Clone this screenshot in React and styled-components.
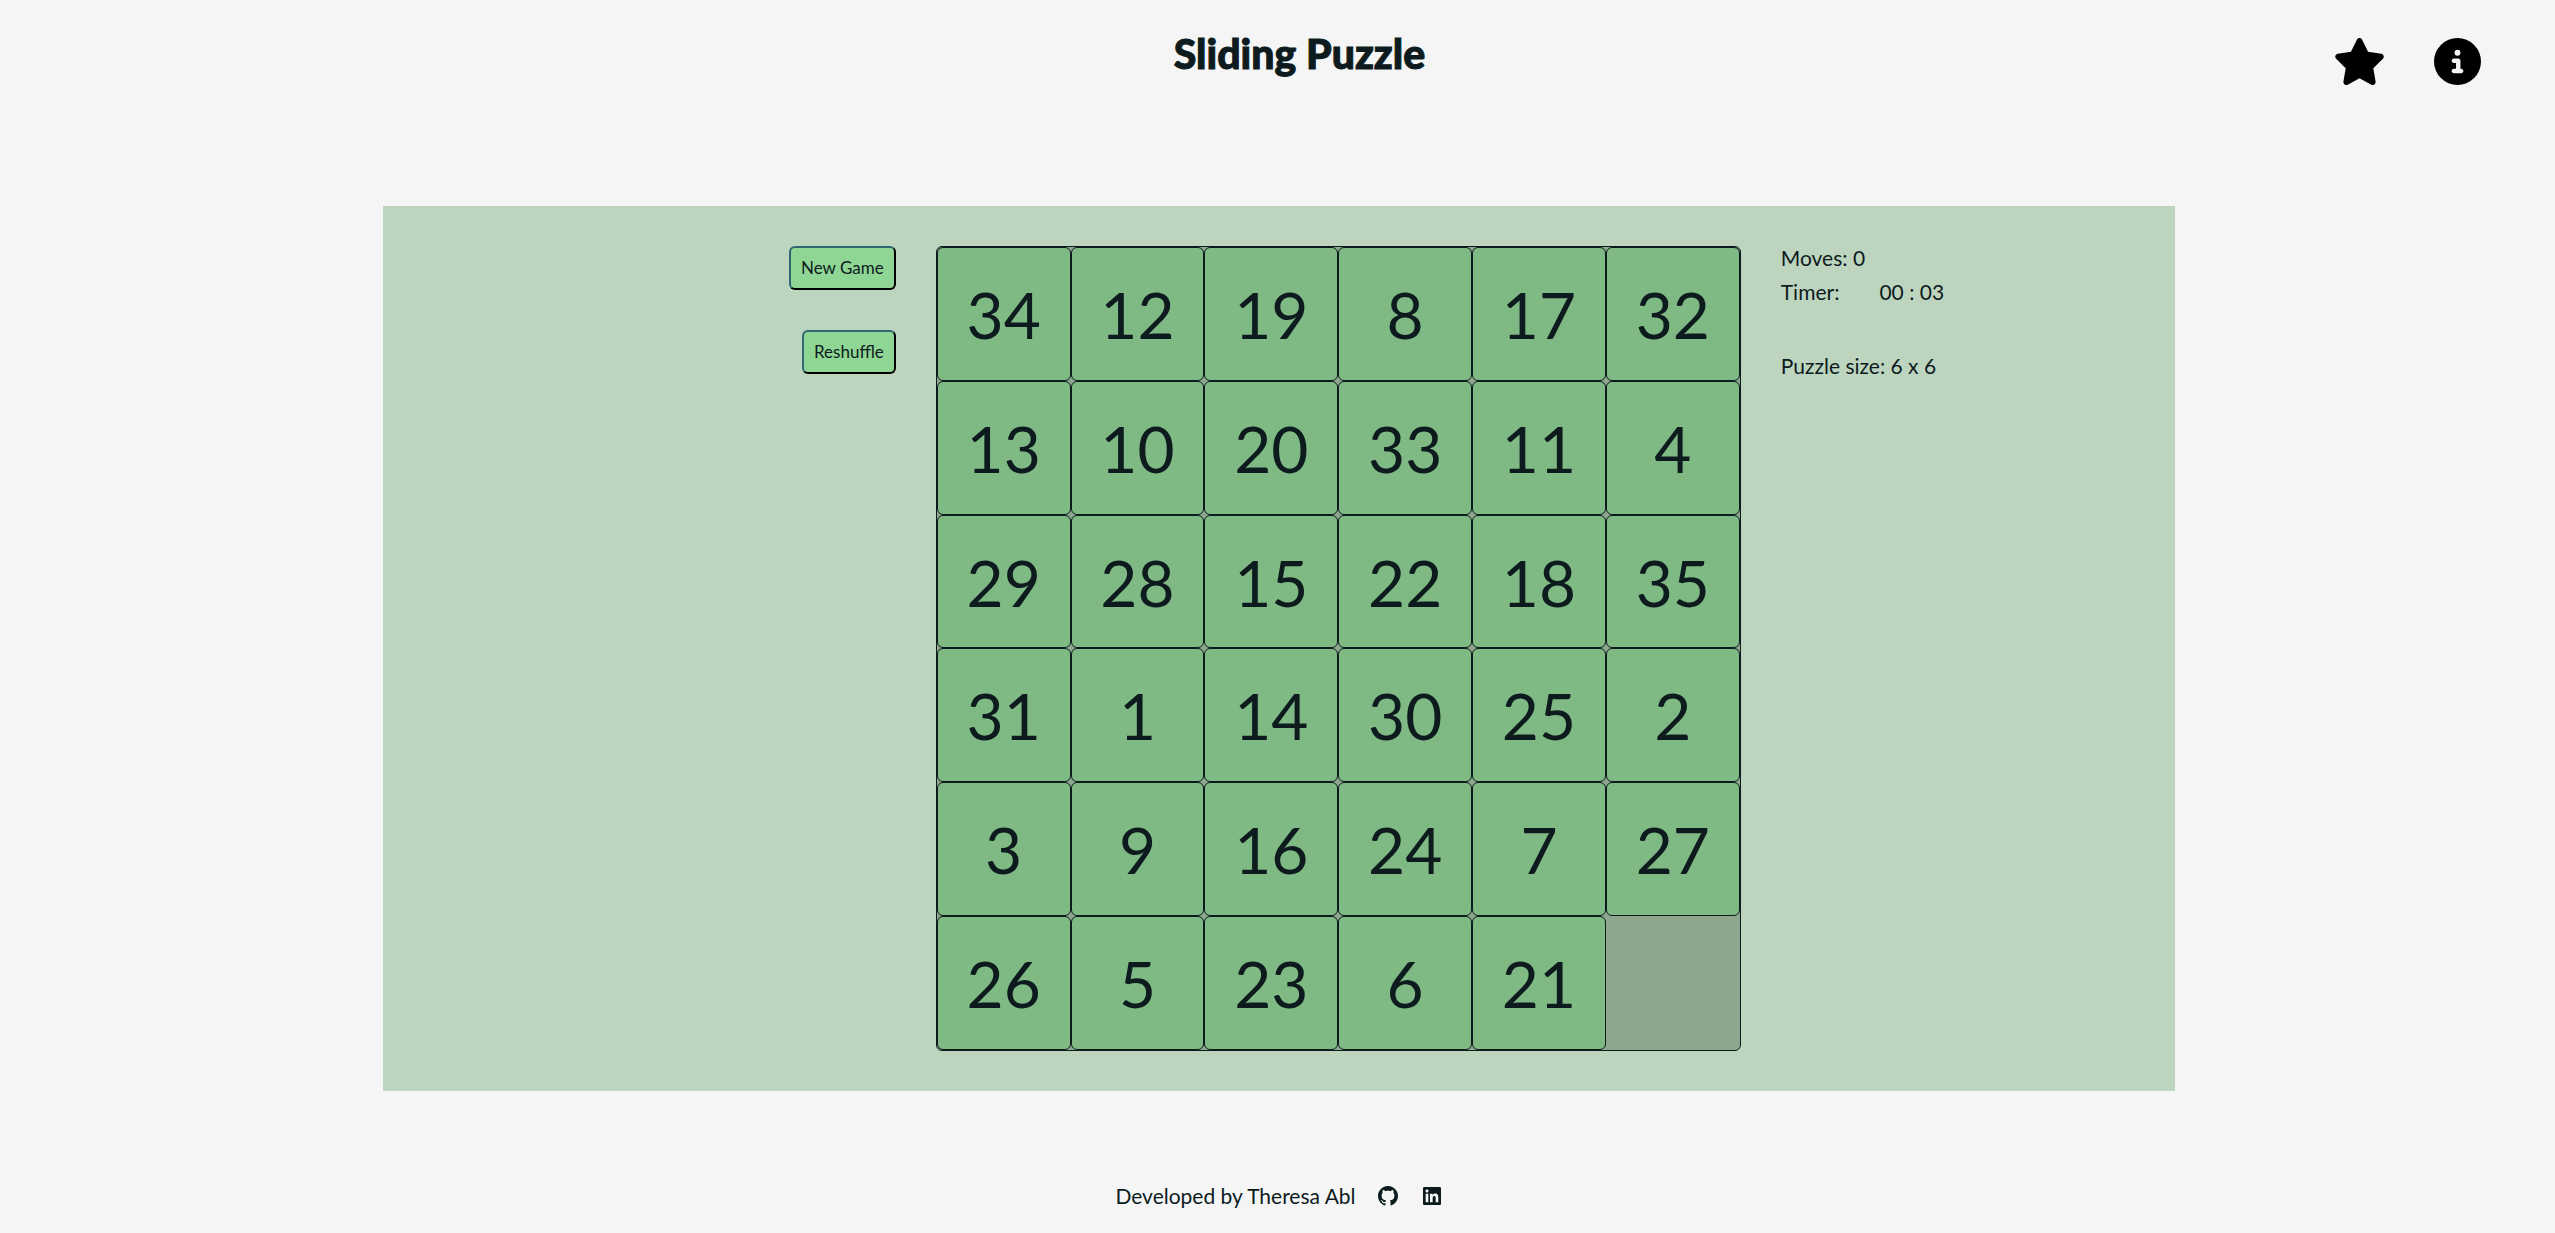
import React, { useState } from "react";
import styled, { createGlobalStyle } from "styled-components";
import { FaStar, FaCircleInfo } from "react-icons/fa6";
import { RiGithubFill, RiLinkedinBoxFill } from "react-icons/ri";

const GlobalStyle = createGlobalStyle`
  * { box-sizing: border-box; }
  body {
    margin: 0;
    background: #f5f5f5;
    color: #0d1b1e;
    font-family: Lato, "Open Sans", sans-serif;
    font-size: 21px;
    line-height: 24px;
  }
`;

const Page = styled.div`
  display: flex;
  flex-direction: column;
  min-height: 100vh;
`;

const Header = styled.header`
  display: grid;
  grid-template-columns: 1fr auto 1fr;
  align-items: start;
  padding: 30px 74px 0 118px;
  height: 206px;
`;

const Title = styled.h1`
  grid-column: 2;
  margin: 0;
  font-size: 41px;
  line-height: 48px;
  font-weight: 900;
  -webkit-text-stroke: 1px #0d1b1e;
`;

const HeaderActions = styled.nav`
  display: flex;
  justify-content: flex-end;
  gap: 48px;
  padding-top: 8px;
`;

const IconButton = styled.button`
  display: flex;
  padding: 0;
  border: 0;
  background: none;
  color: #000;
  cursor: pointer;

  svg {
    width: ${({ $wide }) => ($wide ? 53 : 47)}px;
    height: 47px;
  }
`;

const Main = styled.main`
  padding: 0 380px 0 15%;
`;

const Game = styled.section`
  display: grid;
  grid-template-columns: 13fr 805px 10fr;
  align-items: start;
  gap: 40px;
  padding: 40px 0;
  background: #bdd5bf;
`;

const Controls = styled.div`
  display: flex;
  flex-direction: column;
  align-items: flex-end;
  gap: 40px;
`;

const GameButton = styled.button`
  padding: 10px;
  border: 2px solid;
  border-color: #2f6672 #000 #000 #2f6672;
  border-radius: 6px;
  background: #8fd694;
  color: #0d1b1e;
  font-family: inherit;
  font-size: 17px;
  line-height: 20px;
  cursor: pointer;
`;

const Board = styled.div`
  display: grid;
  grid-template-columns: repeat(6, 1fr);
  grid-template-rows: repeat(6, 1fr);
  aspect-ratio: 1;
  border: 1px solid #0d1b1e;
  border-radius: 6px;
  background: #8da78f;
`;

const Tile = styled.button`
  padding: 2px 0 0;
  border: 1px solid #0d1b1e;
  border-radius: 6px;
  background: #7fba84;
  color: #0d1b1e;
  font-family: inherit;
  font-size: 64px;
  line-height: 76px;
  cursor: pointer;
`;

const Stats = styled.div`
  display: flex;
  flex-direction: column;
  gap: 10px;
`;

const Stat = styled.div`
  display: flex;
  gap: 40px;
`;

const SizeNote = styled.div`
  padding-top: 40px;
`;

const Footer = styled.footer`
  display: flex;
  justify-content: center;
  align-items: center;
  gap: 20px;
  margin-top: auto;
  padding: 0 0 25px 4px;
`;

const SocialLink = styled.a`
  display: flex;
  color: inherit;

  svg {
    width: 24px;
    height: 24px;
  }
`;

const START = [
  34, 12, 19, 8, 17, 32,
  13, 10, 20, 33, 11, 4,
  29, 28, 15, 22, 18, 35,
  31, 1, 14, 30, 25, 2,
  3, 9, 16, 24, 7, 27,
  26, 5, 23, 6, 21, 0,
];

const isNeighbour = (a, b) =>
  Math.abs((a % 6) - (b % 6)) + Math.abs(Math.floor(a / 6) - Math.floor(b / 6)) === 1;

export default function App() {
  const [tiles, setTiles] = useState(START);
  const [moves, setMoves] = useState(0);

  const reset = () => {
    setTiles(START);
    setMoves(0);
  };

  const slide = (index) => {
    const empty = tiles.indexOf(0);
    if (!isNeighbour(index, empty)) return;
    const next = [...tiles];
    [next[index], next[empty]] = [next[empty], next[index]];
    setTiles(next);
    setMoves(moves + 1);
  };

  return (
    <Page>
      <GlobalStyle />
      <Header>
        <Title>Sliding Puzzle</Title>
        <HeaderActions>
          <IconButton $wide aria-label="High scores"><FaStar /></IconButton>
          <IconButton aria-label="Information"><FaCircleInfo /></IconButton>
        </HeaderActions>
      </Header>
      <Main>
        <Game>
          <Controls>
            <GameButton onClick={reset}>New Game</GameButton>
            <GameButton onClick={reset}>Reshuffle</GameButton>
          </Controls>
          <Board>
            {tiles.map((value, index) =>
              value ? (
                <Tile key={value} onClick={() => slide(index)}>{value}</Tile>
              ) : (
                <span key="empty" />
              )
            )}
          </Board>
          <Stats>
            <Stat>Moves: {moves}</Stat>
            <Stat>
              <span>Timer:</span>
              <span>00 : 03</span>
            </Stat>
            <SizeNote>Puzzle size: 6 x 6</SizeNote>
          </Stats>
        </Game>
      </Main>
      <Footer>
        <span>Developed by Theresa Abl</span>
        <SocialLink href="#github" aria-label="GitHub"><RiGithubFill /></SocialLink>
        <SocialLink href="#linkedin" aria-label="LinkedIn"><RiLinkedinBoxFill /></SocialLink>
      </Footer>
    </Page>
  );
}
